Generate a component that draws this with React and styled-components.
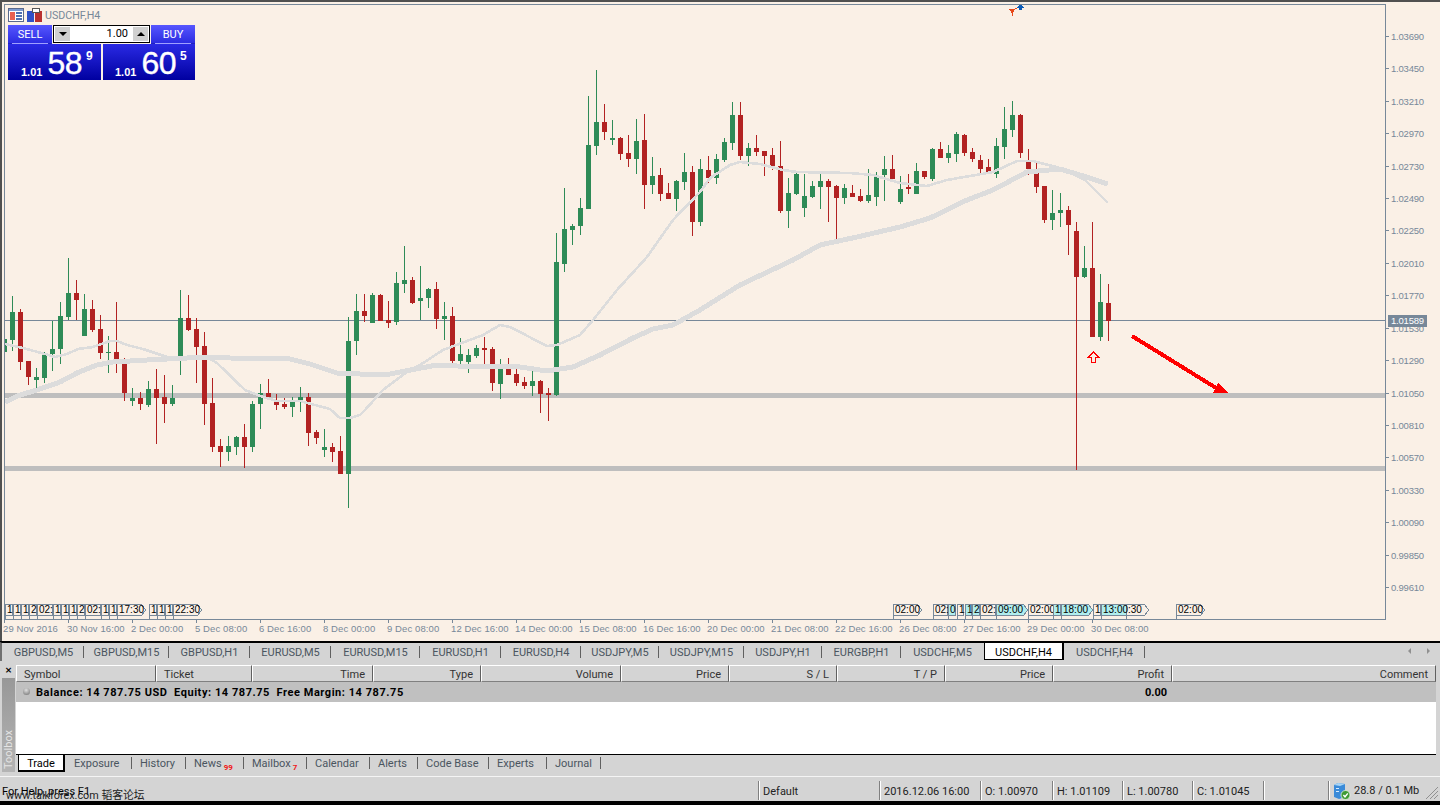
import React from 'react'
import styled, { createGlobalStyle } from 'styled-components'

const Global = createGlobalStyle`
  html, body { margin: 0; padding: 0; background: #000; overflow: hidden; }
  #root { width: 1440px; height: 805px; }
`

const UI_FONT = `Roboto, "Liberation Sans", sans-serif`
const BG = '#faf0e6'
const SLATE = '#778899'
const UP = '#2e8b57'
const DOWN = '#b22222'

// high, low, body top, body bottom, 1 = bull
const candles = [
  [339,352,339,352,1],[296,351,312,340,1],[309,370,312,362,0],[361,385,361,377,0],[368,388,377,380,1],[352,383,355,378,1],
  [321,371,349,354,1],[302,364,316,349,1],[258,320,293,317,1],[280,320,293,300,0],[294,336,309,336,1],[300,332,309,330,0],
  [315,359,329,353,0],[336,373,352,353,1],[302,373,352,361,0],[358,401,363,393,0],[388,406,398,401,1],[392,410,398,404,0],
  [381,407,389,405,1],[369,444,389,398,0],[375,423,397,404,0],[385,406,398,404,1],[290,375,318,361,1],[295,331,318,330,0],
  [318,383,329,347,0],[332,425,346,404,0],[378,452,403,447,0],[439,467,446,452,0],[436,461,446,452,1],[436,455,437,447,1],
  [424,468,437,447,0],[401,452,404,447,1],[384,429,393,404,1],[379,397,393,397,0],[394,410,401,405,0],[398,409,404,407,0],
  [397,417,402,407,1],[387,412,397,400,1],[393,446,397,433,0],[430,444,432,438,0],[429,457,447,450,1],[443,462,447,452,0],
  [436,474,451,474,0],[317,508,341,474,1],[294,355,311,341,1],[294,322,311,316,0],[293,323,295,323,1],[294,321,295,321,0],
  [301,328,320,323,0],[272,325,283,322,1],[246,293,280,284,1],[277,304,280,303,0],[266,320,298,301,1],[288,308,289,298,1],
  [282,329,289,319,0],[302,340,316,319,1],[307,364,316,361,0],[338,364,354,361,1],[349,373,355,362,1],[345,358,348,356,1],
  [337,364,348,350,0],[347,391,349,383,0],[359,399,364,384,1],[358,375,364,375,0],[369,386,374,383,0],[377,389,382,386,0],
  [371,396,381,386,1],[380,413,381,394,0],[388,421,393,395,0],[233,396,262,395,1],[188,272,229,264,1],[224,245,226,230,1],
  [198,235,208,226,1],[96,209,145,209,1],[70,155,122,146,1],[104,140,122,132,0],[120,145,138,140,1],[137,160,138,154,0],
  [135,167,153,159,0],[119,174,141,159,1],[114,209,140,185,0],[157,194,176,185,1],[168,201,175,194,0],[183,199,193,199,0],
  [180,211,181,199,1],[153,190,172,182,1],[166,236,172,222,0],[159,226,169,222,1],[156,183,170,178,0],[154,184,159,178,1],
  [138,162,142,160,1],[102,150,115,143,1],[102,160,115,156,0],[143,166,148,156,1],[135,156,148,152,0],[151,176,151,156,0],
  [148,170,155,166,0],[141,213,166,211,0],[178,228,193,211,1],[173,195,174,194,1],[174,217,196,208,1],[181,198,186,197,1],
  [174,209,181,187,1],[179,222,181,187,0],[185,239,186,198,0],[184,204,188,198,1],[185,197,193,197,0],[189,202,196,201,0],
  [169,203,195,201,1],[172,206,175,197,1],[156,201,169,175,1],[155,179,169,179,0],[176,204,189,202,1],[174,194,187,189,0],
  [163,194,171,194,1],[171,179,171,177,0],[148,181,149,179,1],[142,158,149,158,0],[145,163,153,158,1],[132,162,134,154,1],
  [134,156,135,153,0],[148,162,152,159,0],[155,173,160,169,0],[159,173,167,172,0],[138,178,146,174,1],[107,159,129,147,1],
  [101,137,115,130,1],[114,158,115,153,0],[149,175,162,169,0],[163,193,172,187,0],[186,223,186,220,0],[190,230,213,220,1],
  [193,227,210,213,1],[206,255,210,225,0],[222,470,231,277,0],[246,278,268,277,1],[222,337,268,337,0],[274,341,302,337,1],
  [284,341,303,321,0],
]

const fastMA = '5,344 23,348 45,354 55,357 67,354 78,349 93,347 110,341 117,341 127,345 143,349 167,357 173,359 197,356 207,357 217,363 245,390 263,397 277,401 300,401 330,409 340,418 350,418 360,415 365,410 383,390 407,372 420,365 443,350 483,335 500,325 510,327 547,346 557,345 580,335 593,320 617,290 647,257 673,220 700,192 710,178 730,165 740,162 760,164 783,170 797,172 850,173 873,175 900,183 927,186 947,180 993,172 1017,161 1033,161 1060,168 1085,180 1100,195 1108,203'
const slowMA = '5,402 20,395 37,390 60,382 77,373 97,365 113,362 147,360 187,358 197,357 230,358 290,359 310,364 337,373 360,374 390,374 400,372 437,365 457,366 520,367 547,371 573,367 600,355 633,338 653,329 673,325 700,310 740,285 793,260 820,245 857,237 900,227 930,218 967,200 993,190 1027,172 1060,169 1080,175 1108,184'

const priceLabels = ['1.03690','1.03450','1.03210','1.02970','1.02730','1.02490','1.02250','1.02010','1.01770','1.01530','1.01290','1.01050','1.00810','1.00570','1.00330','1.00090','0.99850','0.99610']
const timeLabels = ['29 Nov 2016','30 Nov 16:00','2 Dec 00:00','5 Dec 08:00','6 Dec 16:00','8 Dec 00:00','9 Dec 08:00','12 Dec 16:00','14 Dec 00:00','15 Dec 08:00','16 Dec 16:00','20 Dec 00:00','21 Dec 08:00','22 Dec 16:00','26 Dec 08:00','27 Dec 16:00','29 Dec 00:00','30 Dec 08:00']

// x, width, text, highlighted, pointed
const events = [
  [5,7,'1'],[13,7,'1'],[21,7,'1'],[29,7,'2'],[37,15,'02:'],[53,7,'1'],[61,7,'1'],[69,7,'1'],[77,7,'2'],[85,15,'02:'],[101,7,'1'],[109,7,'1'],[117,28,'17:30',0,1],
  [149,7,'1'],[157,7,'1'],[165,7,'1'],[173,28,'22:30',0,1],
  [893,28,'02:00',0,1],[933,14,'02:'],[948,7,'0',1],[957,6,'1'],[965,6,'1',1],[972,7,'2',1],[980,15,'02:'],[996,31,'09:00',1,1],[1028,25,'02:00'],[1053,7,'1',1],[1061,31,'18:00',1,1],
  [1126,22,':30',0,1],[1093,7,'1'],[1101,25,'13:00',1],[1176,28,'02:00',0,1],
]

const symbolTabs = [
  ['GBPUSD,M5',81],['GBPUSD,M15',85],['GBPUSD,H1',81],['EURUSD,M5',81],['EURUSD,M15',89],['EURUSD,H1',81],['EURUSD,H4',80],
  ['USDJPY,M5',78],['USDJPY,M15',85],['USDJPY,H1',78],['EURGBP,H1',79],['USDCHF,M5',83],['USDCHF,H4',80,true],['USDCHF,H4',81],
]

const columns = [
  ['Symbol',140,'left'],['Ticket',96,'left'],['Time',121],['Type',108],['Volume',140],['Price',108],['S / L',108],['T / P',108],['Price',108],['Profit',119],['Comment',264],
]

const termTabs = [
  ['Exposure',66],['History',54],['News',58,'99'],['Mailbox',63,'7'],['Calendar',63],['Alerts',48],['Code Base',71],['Experts',58],['Journal',54],
]

const statusCells = [['Default',121],['2016.12.06 16:00',101],['O: 1.00970',72],['H: 1.01109',70],['L: 1.00780',70],['C: 1.01045',71],['',65]]

const Page = styled.div`
  width: 1440px;
  height: 805px;
  display: flex;
  flex-direction: column;
  background: #000;
  font-family: ${UI_FONT};
  font-size: 11px;
  color: #222;
`

const ChartWindow = styled.div`
  position: relative;
  height: 639px;
  flex: none;
  border-top: 2px solid #505050;
  border-left: 2px solid #505050;
  background: ${BG};
  svg { display: block; }
`

const AxisText = styled.text`
  font-family: "Liberation Sans", sans-serif;
  font-size: 9.5px;
  fill: ${SLATE};
`

const EventText = styled.text`
  font-family: "Liberation Sans", sans-serif;
  font-size: 10px;
  fill: #000;
`

const Overlay = styled.div`
  position: absolute;
  left: 6px;
  top: 4px;
  display: flex;
  flex-direction: column;
  gap: 1px;
`

const TitleRow = styled.div`
  display: flex;
  align-items: center;
  gap: 3px;
  height: 18px;
  color: ${SLATE};
  font-size: 10.7px;
`

const TradePanel = styled.div`
  width: 187px;
  display: flex;
  flex-direction: column;
`

const ButtonRow = styled.div`
  display: flex;
  justify-content: space-between;
  height: 19px;
  position: relative;
`

const TradeButton = styled.div`
  width: 44px;
  display: flex;
  justify-content: center;
  align-items: center;
  color: #fff;
  background: linear-gradient(#5656ff, #2a2ae0);
  box-shadow: inset 0 -1px 0 #2020c0;
  position: relative;
  &::after {
    content: '';
    position: absolute;
    left: 4px;
    right: 4px;
    bottom: 0;
    height: 1px;
    background: #a0a0ff;
  }
`

const Spinner = styled.div`
  width: 97px;
  height: 18px;
  box-sizing: border-box;
  border: 1px solid #000;
  background: #fff;
  display: flex;
  margin: 0 1px;
`

const SpinButton = styled.div`
  width: 17px;
  background: #d0d0d0;
  border: 1px solid #fff;
  box-sizing: border-box;
  display: flex;
  align-items: center;
  justify-content: center;
  &::after {
    content: '';
    border-left: 4px solid transparent;
    border-right: 4px solid transparent;
    ${p => (p.$up ? 'border-bottom: 4px solid #000;' : 'border-top: 4px solid #000;')}
  }
`

const SpinValue = styled.div`
  flex: 1;
  text-align: right;
  line-height: 16px;
  padding-right: 4px;
  color: #000;
`

const PriceRow = styled.div`
  display: flex;
  gap: 2px;
  height: 36px;
`

const PriceBox = styled.div`
  flex: 1;
  background: linear-gradient(#2a2ae4, #0000a0);
  color: #fff;
  display: flex;
  padding-left: ${p => p.$pad}px;
  position: relative;
`

const PriceSmall = styled.span`
  font-family: "Liberation Sans", sans-serif;
  font-weight: 700;
  font-size: 11px;
  align-self: flex-end;
  margin-bottom: 2px;
  margin-right: 5px;
`

const PriceBig = styled.span`
  font-family: "Liberation Sans", sans-serif;
  font-size: 32px;
  line-height: 38px;
  letter-spacing: -0.5px;
  -webkit-text-stroke: 0.4px #fff;
`

const PriceSup = styled.span`
  font-family: "Liberation Sans", sans-serif;
  font-weight: 700;
  font-size: 12px;
  margin: 5px 0 0 4px;
`

const TabBar = styled.div`
  height: 19px;
  flex: none;
  box-sizing: border-box;
  border-top: 1px solid #000;
  border-left: 2px solid #707070;
  margin-top: 1px;
  background: #d4d4d4;
  display: flex;
  padding-left: 1px;
  position: relative;
`

const SymbolTab = styled.div`
  width: ${p => p.$w}px;
  box-sizing: border-box;
  height: 17px;
  text-align: center;
  line-height: 19px;
  color: ${p => (p.$active ? '#000' : '#4a5560')};
  ${p => p.$active
    ? 'background: #fff; border-left: 1px solid #000; border-right: 2px solid #000; border-bottom: 1px solid #000;'
    : ''}
  ${p => (p.$sep ? 'position: relative;' : '')}
  ${p => (p.$sep ? `&::after { content: ''; position: absolute; right: 0; top: 3px; height: 12px; width: 1px; background: #606060; }` : '')}
`

const ScrollArrows = styled.div`
  position: absolute;
  right: 10px;
  top: 5px;
  display: flex;
  gap: 16px;
`

const ScrollArrow = styled.span`
  border-top: 3px solid transparent;
  border-bottom: 3px solid transparent;
  ${p => (p.$right ? 'border-left: 3px solid #909090;' : 'border-right: 3px solid #909090;')}
`

const Toolbox = styled.div`
  height: 115px;
  flex: none;
  background: #d4d4d4;
  display: flex;
  box-sizing: border-box;
  padding: 4px 4px 4px 1px;
`

const SideStrip = styled.div`
  width: 15px;
  display: flex;
  flex-direction: column;
  flex: none;
`

const CloseX = styled.div`
  height: 13px;
  font-family: "DejaVu Sans", sans-serif;
  font-size: 9px;
  font-weight: 700;
  line-height: 11px;
  text-align: center;
  color: #000;
`

const ToolboxLabel = styled.div`
  flex: 1;
  margin: 0 1px 0 1px;
  background: linear-gradient(#b4b4b4, #989898);
  color: #e4e4e4;
  writing-mode: vertical-rl;
  transform: rotate(180deg);
  text-align: left;
  line-height: 13px;
  font-size: 11px;
  padding-top: 3px;
`

const Terminal = styled.div`
  flex: 1;
  display: flex;
  flex-direction: column;
`

const HeaderRow = styled.div`
  display: flex;
  height: 17px;
  flex: none;
`

const HeaderCell = styled.div`
  width: ${p => p.$w}px;
  box-sizing: border-box;
  background: #d4d4d4;
  border-top: 1px solid #fff;
  border-left: 1px solid #fff;
  border-right: 1px solid #606060;
  border-bottom: 1px solid #808080;
  text-align: ${p => p.$align || 'right'};
  padding: 0 7px;
  line-height: 17px;
  color: #333;
`

const BalanceRow = styled.div`
  height: 20px;
  flex: none;
  background: #c0c0c0;
  display: flex;
  align-items: center;
  font-weight: 700;
  color: #000;
  padding: 1px 269px 0 7px;
  box-sizing: border-box;
`

const Bullet = styled.span`
  width: 7px;
  height: 7px;
  border-radius: 50%;
  background: radial-gradient(circle at 45% 30%, #e0e0e0, #6c6c6c);
  margin: -2px 6px 0 0;
`

const BalanceText = styled.span`
  flex: 1;
  white-space: pre;
  font-size: 11px;
  letter-spacing: 0.55px;
`

const BlankArea = styled.div`
  flex: 1;
  background: #fff;
`

const TermTabs = styled.div`
  height: 18px;
  flex: none;
  border-top: 1px solid #000;
  box-sizing: border-box;
  display: flex;
  padding-left: 2px;
  background: #d4d4d4;
`

const ActiveTermTab = styled.div`
  width: 47px;
  height: 17px;
  box-sizing: border-box;
  background: #fff;
  border-left: 1px solid #000;
  border-right: 2px solid #000;
  border-bottom: 2px solid #000;
  text-align: center;
  line-height: 17px;
  color: #000;
  margin-right: 1px;
`

const TermTab = styled.div`
  width: ${p => p.$w}px;
  box-sizing: border-box;
  padding-left: 8px;
  line-height: 18px;
  color: #4a5560;
  position: relative;
  white-space: nowrap;
  &::after {
    content: '';
    position: absolute;
    right: 0;
    top: 2px;
    height: 12px;
    width: 1px;
    background: #606060;
  }
`

const Badge = styled.sup`
  color: #f01818;
  font-size: 8px;
  font-weight: 700;
  vertical-align: -3px;
  margin-left: 2px;
  line-height: 0;
`

const StatusBar = styled.div`
  height: 25px;
  flex: none;
  box-sizing: border-box;
  border-top: 1px solid #f4f4f4;
  background: #d4d4d4;
  display: flex;
  position: relative;
  color: #222;
`

const StatusHelp = styled.div`
  flex: 1;
  padding: 8px 0 0 2px;
  color: #000;
`

const Watermark = styled.div`
  position: absolute;
  left: 6px;
  top: 9px;
  color: #222;
  font-size: 10.8px;
  white-space: nowrap;
  font-family: ${UI_FONT.replace('sans-serif', '"Noto Sans CJK SC", sans-serif')};
`

const StatusCell = styled.div`
  width: ${p => p.$w}px;
  box-sizing: border-box;
  margin-top: 4px;
  height: 19px;
  border-left: 1px solid #808080;
  box-shadow: inset 1px 0 0 #fff;
  padding-left: 4px;
  line-height: 21px;
  white-space: nowrap;
`

const ConnCell = styled(StatusCell)`
  display: flex;
  align-items: center;
  gap: 3px;
  position: relative;
`

const Grip = styled.svg`
  position: absolute;
  right: 1px;
  bottom: 0;
`

const Black = styled.div`
  flex: 1;
  background: #000;
`

const ChartIcons = () => (
  <svg width="34" height="16" viewBox="0 0 34 16" shapeRendering="crispEdges" style={{ flex: 'none' }}>
    <rect x="0.5" y="1.5" width="15" height="13" fill="#fff" stroke="#5a6a8c" />
    <rect x="1" y="2" width="14" height="2" fill="#7c9ad0" />
    <rect x="2" y="5" width="5" height="8" fill="#e86050" />
    <rect x="8" y="5" width="6" height="2" fill="#5070b0" />
    <rect x="8" y="8" width="6" height="2" fill="#5070b0" />
    <rect x="8" y="11" width="6" height="2" fill="#5070b0" />
    <rect x="19" y="4" width="7" height="11" fill="#2f50c8" />
    <rect x="27" y="4" width="7" height="11" fill="#b83030" />
    <rect x="24.5" y="1.5" width="7" height="4" fill="#fff" stroke="#555" strokeWidth="1" />
  </svg>
)

const ConnIcon = () => (
  <svg width="18" height="18" viewBox="0 0 18 18" style={{ flex: 'none' }}>
    <path d="M1 3 L5 1 L12 2 L12 15 L6 17 L1 15 Z" fill="#3a8ad8" />
    <path d="M1 3 L5 1 L12 2 L7 4 Z" fill="#a8d4f4" />
    <rect x="3" y="6" width="3" height="1" fill="#d8ecff" />
    <rect x="3" y="9" width="3" height="1" fill="#d8ecff" />
    <circle cx="12.5" cy="13" r="4.5" fill="#3f9a35" stroke="#e8f4e0" strokeWidth="0.8" />
    <path d="M10.4 13 L12 14.8 L14.8 11.4" fill="none" stroke="#fff" strokeWidth="1.4" />
  </svg>
)

function Candle({ c, i }) {
  const x = 4 + 8 * i
  const color = c[4] ? UP : DOWN
  return (
    <g fill={color}>
      <rect x={x} y={c[0]} width="1" height={c[1] - c[0]} />
      <rect x={x - 2} y={c[2]} width="5" height={Math.max(c[3] - c[2], 1)} />
    </g>
  )
}

function EventFlag({ e }) {
  const [x, w, text, hi, arrow] = e
  const y = 604
  const h = 11
  const right = x + w
  const points = arrow
    ? `${x + 0.5},${y + 0.5} ${right - 3.5},${y + 0.5} ${right + 0.5},${y + h / 2 + 0.5} ${right - 3.5},${y + h + 0.5} ${x + 0.5},${y + h + 0.5}`
    : `${x + 0.5},${y + 0.5} ${right + 0.5},${y + 0.5} ${right + 0.5},${y + h + 0.5} ${x + 0.5},${y + h + 0.5}`
  return (
    <g>
      <rect x={x} y={y} width="1" height="15" fill={SLATE} />
      <polygon points={points} fill={hi ? '#afeeee' : BG} stroke={SLATE} strokeWidth="1" shapeRendering="crispEdges" />
      <EventText x={x + 2} y={y + 9}>{text}</EventText>
    </g>
  )
}

function Chart() {
  return (
    <svg width="1438" height="639" viewBox="2 2 1438 639">
      <defs>
        <clipPath id="plot"><rect x="5" y="5" width="1380" height="614" /></clipPath>
      </defs>

      {/* frame and axes */}
      <rect x="4.5" y="4.5" width="1381" height="615" fill="none" stroke={SLATE} shapeRendering="crispEdges" />
      {priceLabels.map((label, i) => {
        const y = Math.round(36 + i * 32.41)
        return (
          <g key={label}>
            <rect x="1386" y={y} width="3" height="1" fill={SLATE} />
            <AxisText x="1391" y={y + 4} letterSpacing="-0.2">{label}</AxisText>
          </g>
        )
      })}
      {timeLabels.map((label, i) => (
        <g key={label}>
          <rect x={4 + 64 * i} y="620" width="1" height="3" fill={SLATE} />
          <AxisText x={3 + 64 * i} y="632" letterSpacing="0.1">{label}</AxisText>
        </g>
      ))}

      <g clipPath="url(#plot)" shapeRendering="crispEdges">
        {/* support levels and price line */}
        <rect x="5" y="393" width="1380" height="5" fill="#bebebe" />
        <rect x="5" y="466" width="1380" height="5" fill="#bebebe" />
        <rect x="5" y="320" width="1380" height="1" fill={SLATE} />

        {candles.map((c, i) => <Candle key={i} c={c} i={i} />)}

        <polyline points={slowMA} fill="none" stroke="#dcdcdc" strokeWidth="5" />
        <polyline points={fastMA} fill="none" stroke="#dcdcdc" strokeWidth="2.6" />

        {/* hand-drawn target arrow */}
        <line x1="1132" y1="336" x2="1221" y2="391" stroke="#ff0000" strokeWidth="4" />
        <polygon points="1213,393 1218,383 1228,393" fill="#ff0000" />

        {/* up arrow signal */}
        <path d="M1093.5 352 L1098.5 357 L1095.5 357 L1095.5 362.5 L1091.5 362.5 L1091.5 357 L1088.5 357 Z" fill="none" stroke="#ff0000" />

        {/* trade markers */}
        <path d="M1009 9 L1015 9 L1012.5 14 Z" fill="#e84818" />
        <rect x="1012" y="14" width="1" height="2" fill="#e84818" />
        <rect x="1015" y="8" width="2" height="1" fill="#e84818" />
        <path d="M1017 8 L1020.5 4 L1024 8 L1022 8 L1022 10 L1019 10 L1019 8 Z" fill="#0b5cb8" />
      </g>

      {events.map((e, i) => <EventFlag key={i} e={e} />)}

      <rect x="1388" y="315" width="39" height="12" fill={SLATE} />
      <AxisText x="1391" y="324" letterSpacing="-0.2" style={{ fill: '#fff' }}>1.01589</AxisText>
    </svg>
  )
}

export default function App() {
  return (
    <Page>
      <Global />
      <ChartWindow>
        <Chart />
        <Overlay>
          <TitleRow>
            <ChartIcons />
            USDCHF,H4
          </TitleRow>
          <TradePanel>
            <ButtonRow>
              <TradeButton>SELL</TradeButton>
              <Spinner>
                <SpinButton />
                <SpinValue>1.00</SpinValue>
                <SpinButton $up />
              </Spinner>
              <TradeButton>BUY</TradeButton>
            </ButtonRow>
            <PriceRow>
              <PriceBox $pad={13}>
                <PriceSmall>1.01</PriceSmall>
                <PriceBig>58</PriceBig>
                <PriceSup>9</PriceSup>
              </PriceBox>
              <PriceBox $pad={12}>
                <PriceSmall>1.01</PriceSmall>
                <PriceBig>60</PriceBig>
                <PriceSup>5</PriceSup>
              </PriceBox>
            </PriceRow>
          </TradePanel>
        </Overlay>
      </ChartWindow>

      <TabBar>
        {symbolTabs.map(([name, w, active], i) => (
          <SymbolTab key={i} $w={w} $active={active} $sep={!active && i !== 11}>{name}</SymbolTab>
        ))}
        <ScrollArrows>
          <ScrollArrow />
          <ScrollArrow $right />
        </ScrollArrows>
      </TabBar>

      <Toolbox>
        <SideStrip>
          <CloseX>×</CloseX>
          <ToolboxLabel>Toolbox</ToolboxLabel>
        </SideStrip>
        <Terminal>
          <HeaderRow>
            {columns.map(([name, w, align], i) => (
              <HeaderCell key={i} $w={w} $align={align}>{name}</HeaderCell>
            ))}
          </HeaderRow>
          <BalanceRow>
            <Bullet />
            <BalanceText>Balance: 14 787.75 USD  Equity: 14 787.75  Free Margin: 14 787.75</BalanceText>
            <span>0.00</span>
          </BalanceRow>
          <BlankArea />
          <TermTabs>
            <ActiveTermTab>Trade</ActiveTermTab>
            {termTabs.map(([name, w, badge]) => (
              <TermTab key={name} $w={w}>
                {name}
                {badge && <Badge>{badge}</Badge>}
              </TermTab>
            ))}
          </TermTabs>
        </Terminal>
      </Toolbox>

      <StatusBar>
        <StatusHelp>For Help, press F1</StatusHelp>
        <Watermark>www.talkforex.com 韬客论坛</Watermark>
        {statusCells.map(([text, w], i) => (
          <StatusCell key={i} $w={w}>{text}</StatusCell>
        ))}
        <ConnCell $w={112}>
          <ConnIcon />
          28.8 / 0.1 Mb
          <Grip width="14" height="14" viewBox="0 0 14 14">
            <path d="M13 1 L1 13 M13 5 L5 13 M13 9 L9 13" stroke="#909090" strokeWidth="1" />
          </Grip>
        </ConnCell>
      </StatusBar>
      <Black />
    </Page>
  )
}
